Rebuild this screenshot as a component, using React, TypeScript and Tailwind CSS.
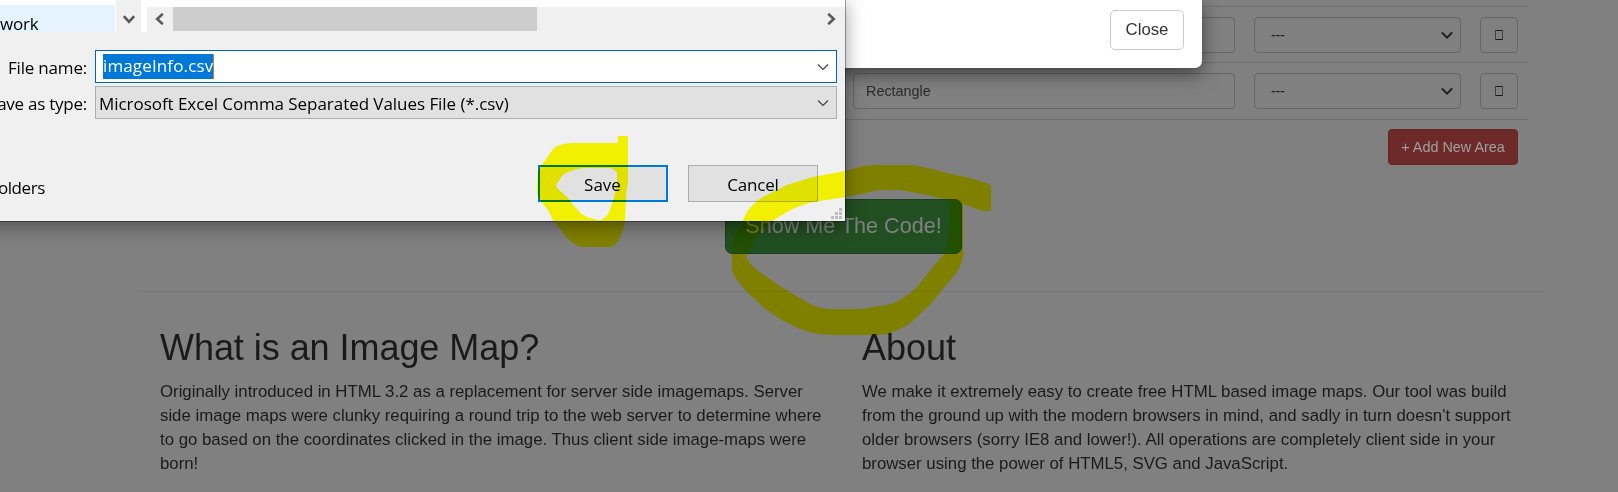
import type { ReactNode } from "react";

function Chevron({ className, d, width = 2 }: { className: string; d: string; width?: number }) {
  return (
    <svg viewBox="0 0 12 12" className={className} fill="none" stroke="currentColor" strokeWidth={width}>
      <path d={d} />
    </svg>
  );
}

function AreaRow({ shape, last }: { shape: string; last?: boolean }) {
  return (
    <div
      className={
        last
          ? "flex h-[57px] shrink-0 justify-end border-b border-[#6e6e6e] pt-[10px] pr-[10px]"
          : "flex h-14 shrink-0 justify-end border-b border-[#6e6e6e] pt-[10px] pr-[10px]"
      }
    >
      <div className="mr-[19px] flex h-9 w-[382px] items-center rounded-[4px] border border-[#666] px-3 pt-[2px] text-[#2a2a2a]">
        {shape}
      </div>
      <div className="mr-[19px] flex h-9 w-[207px] items-center justify-between rounded-[4px] border border-[#666] pr-[7px] pl-4 text-[#1d1d1d]">
        <span className="pt-[2px] tracking-[-0.3px]">---</span>
        <Chevron className="h-3 w-3" d="M0.8 3.4 6 8.6 11.2 3.4" width={2} />
      </div>
      <div className="flex h-9 w-[38px] items-center justify-center rounded-[4px] border border-[#666]">
        <span className="h-[10px] w-2 border border-x-[#444] border-y-[#1a1a1a]" />
      </div>
    </div>
  );
}

function Article({ title, lines }: { title: string; lines: string[] }) {
  return (
    <section className="w-[702px] shrink-0 pl-5 text-[#1a1a1a]">
      <h2 className="text-[36px] leading-10 tracking-[-0.05px]">{title}</h2>
      <p className="mt-3 text-[16.8px] leading-6">
        {lines.map((line) => (
          <span key={line} className="block whitespace-nowrap">
            {line}
          </span>
        ))}
      </p>
    </section>
  );
}

function Page() {
  return (
    <main className="flex h-full flex-col pr-[74px] pl-[140px] text-[14.4px]">
      <div className="mr-4 flex flex-col">
        <div className="h-[7px] border-b border-[#6e6e6e]" />
        <AreaRow shape="" />
        <AreaRow shape="Rectangle" last />
        <div className="flex justify-end pt-[9px] pr-[10px]">
          <button className="h-9 w-[130px] rounded-[4px] border border-[#6a2422] bg-[#6d2a28] pt-[1px] text-[14.4px] whitespace-nowrap text-[#a0a0a0]">
            + Add New Area
          </button>
        </div>
      </div>
      <div className="mt-[34px] flex pl-[585px]">
        <button className="h-[55px] w-[237px] rounded-[7px] border border-[#1c411c] bg-[#224f22] text-[21.6px] whitespace-nowrap text-[#808080]">
          Show Me The Code!
        </button>
      </div>
      <hr className="mt-[37px] border-t border-[#777]" />
      <div className="mt-9 flex">
        <Article
          title="What is an Image Map?"
          lines={[
            "Originally introduced in HTML 3.2 as a replacement for server side imagemaps. Server",
            "side image maps were clunky requiring a round trip to the web server to determine where",
            "to go based on the coordinates clicked in the image. Thus client side image-maps were",
            "born!",
          ]}
        />
        <Article
          title="About"
          lines={[
            "We make it extremely easy to create free HTML based image maps. Our tool was build",
            "from the ground up with the modern browsers in mind, and sadly in turn doesn't support",
            "older browsers (sorry IE8 and lower!). All operations are completely client side in your",
            "browser using the power of HTML5, SVG and JavaScript.",
          ]}
        />
      </div>
    </main>
  );
}

function CodeModal() {
  return (
    <div className="absolute top-0 left-[400px] flex h-[68px] w-[802px] justify-end rounded-b-[7px] bg-white pt-[10px] pr-[18px] shadow-[0_6px_18px_rgba(0,0,0,0.5)]">
      <button className="h-10 w-[74px] rounded-[5px] border border-[#ccc] bg-white text-[16.8px] text-[#333]">
        Close
      </button>
    </div>
  );
}

function Label({ children }: { children: ReactNode }) {
  return <div className="flex w-[87px] shrink-0 items-center justify-end pt-[2px] whitespace-nowrap">{children}</div>;
}

function SaveDialog() {
  return (
    <div className="absolute top-0 -left-[60px] flex h-[221px] w-[905px] flex-col bg-[#f0f0f0] pl-[60px] font-['Open_Sans',sans-serif] text-[17px] tracking-[-0.2px] text-black shadow-[0_0_0_1px_rgba(0,0,0,0.35),0_4px_18px_rgba(0,0,0,0.42)]">
      <div className="flex h-8 shrink-0">
        <div className="flex w-[116px] bg-white pt-[5px] pr-[1px]">
          <div className="flex w-full items-center justify-start bg-[#e5f3ff] pt-[10px]">
            <span className="leading-[17px]">work</span>
          </div>
        </div>
        <div className="flex w-[25px] justify-center pt-[13px] text-[#5a5a5a]">
          <Chevron className="h-3 w-3" d="M0.8 3.2 6 8.8 11.2 3.2" width={2.6} />
        </div>
        <div className="w-[6px] bg-white" />
        <div className="flex flex-1 flex-col">
          <div className="h-[7px] bg-white" />
          <div className="flex h-6 items-center text-[#5a5a5a]">
            <div className="flex w-[26px] justify-center">
              <Chevron className="h-3 w-3" d="M8.8 0.8 3.2 6 8.8 11.2" width={2.6} />
            </div>
            <div className="h-6 w-[364px] bg-[#cdcdcd]" />
            <Chevron className="mr-[8px] ml-auto h-3 w-3" d="M3.2 0.8 8.8 6 3.2 11.2" width={2.6} />
          </div>
        </div>
      </div>
      <div className="mt-[18px] flex h-[33px] gap-2">
        <Label>File name:</Label>
        <div className="flex w-[742px] items-center justify-between border border-[#0067b8] bg-white pr-[7px] pl-[7px]">
          <span className="-mt-[1px] flex h-[25px] w-[111px] items-center border-r border-[#c87a3a] bg-[#0078d7] tracking-[0.13px] whitespace-nowrap text-white">
            imageInfo.csv
          </span>
          <Chevron className="h-3 w-3 text-[#404040]" d="M1 3.5 6 8.5 11 3.5" width={1.2} />
        </div>
      </div>
      <div className="mt-[3px] flex h-[33px] gap-2">
        <Label>
          <span className="tracking-[-0.25px]">ave as type:</span>
        </Label>
        <div className="flex w-[742px] items-center justify-between border border-[#adadad] bg-[#e1e1e1] pr-[7px] pl-[3px]">
          <span className="pt-[2px] tracking-[-0.05px] whitespace-nowrap">
            Microsoft Excel Comma Separated Values File (*.csv)
          </span>
          <Chevron className="h-3 w-3 text-[#404040]" d="M1 3.5 6 8.5 11 3.5" width={1.2} />
        </div>
      </div>
      <div className="mt-[46px] flex h-[37px]">
        <div className="flex w-[45px] shrink-0 items-center justify-end pt-[9px] tracking-[-0.4px] whitespace-nowrap">
          olders
        </div>
        <button className="ml-[493px] h-full w-[130px] border-2 border-[#0078d7] bg-[#e1e1e1] pt-[2px] pr-[1px] tracking-[0px]">
          Save
        </button>
        <button className="ml-5 h-full w-[130px] border border-[#adadad] bg-[#e1e1e1] pt-[2px]">Cancel</button>
      </div>
      <svg viewBox="0 0 12 12" className="absolute right-[2px] bottom-[1px] h-3 w-3" fill="#bcbcbc">
        <path d="M8 0h3v3h-3zM4 4h3v3h-3zM8 4h3v3h-3zM0 8h3v3h-3zM4 8h3v3h-3zM8 8h3v3h-3z" />
      </svg>
    </div>
  );
}

function Highlighter() {
  return (
    <svg
      viewBox="0 0 1618 492"
      className="pointer-events-none absolute inset-0 h-full w-full mix-blend-multiply"
      fill="#ffff00"
      fillRule="evenodd"
    >
      <path d="M618 136H628V183Q626 190 626 197L625 220Q624 230 620 237Q616 247 608 247H585Q578 247 573 243Q567 239 563 233L553 220L548 210L540 200Q537 195 537 190L538 173L540 167L547 158L553 149Q556 146 560 145Q566 143 572 143H618ZM556 185L562 176Q565 173 568 172Q575 169 583 168H608Q613 168 615 171Q618 172 617 175V183L614 198L609 212Q607 217 604 218Q601 221 598 220Q590 219 583 215Q579 212 575 207L567 197L557 188Z" />
      <path d="M991 186V211H983L963 204V250Q964 256 962 260Q960 267 957 272L948 283L938 295L930 305L920 314L908 325L893 332Q887 335 880 335H840Q824 335 813 333L800 329L780 319L763 307L747 292L737 280Q732 273 732 268V247Q732 239 737 232L743 220Q747 210 753 205Q759 198 767 195L787 185L813 177L845 171L863 166Q870 165 877 165H913Q930 168 947 173L970 178L987 183ZM772 221L787 212Q800 205 813 202L845 197L867 193Q876 190 883 190H900L927 195L948 200Q951 208 950 217L948 240Q947 250 945 253L933 267L917 287Q909 295 900 300Q891 305 880 306L860 309H827Q818 308 810 304L783 288L760 272Q751 266 748 260Q745 257 747 255L753 243L760 233Q764 226 772 221Z" />
    </svg>
  );
}

export default function App() {
  return (
    <div className="relative h-[492px] w-[1618px] overflow-hidden bg-[#808080] font-['Liberation_Sans',sans-serif]">
      <Page />
      <CodeModal />
      <SaveDialog />
      <Highlighter />
    </div>
  );
}
